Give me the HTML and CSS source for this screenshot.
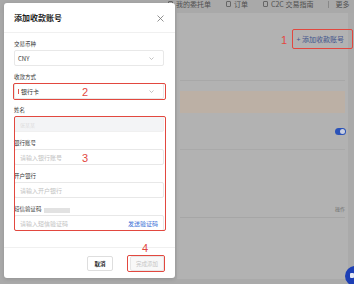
FILE: index.html
```html
<!DOCTYPE html>
<html lang="zh-CN">
<head>
<meta charset="utf-8">
<title>添加收款账号</title>
<link rel="stylesheet" href="styles.css">
</head>
<body>
<div class="page">
  <nav class="topnav">
    <span class="nav-item"><span class="nav-ico"></span>我的委托单</span>
    <span class="nav-item"><span class="nav-ico"></span>订单</span>
    <span class="nav-item"><span class="nav-ico"></span>C2C 交易指南</span>
    <span class="nav-sep"></span>
    <span class="nav-item nav-more">更多</span>
  </nav>
  <main class="content">
    <div class="toolbar"><span class="add-btn">+ 添加收款账号</span></div>
    <div class="notice"></div>
    <div class="row-toggle"><span class="toggle"><span class="knob"></span></span></div>
    <div class="table-head"><span>操作</span></div>
  </main>
</div>

<div class="fab"><span class="fab-ico"></span></div>

<section class="modal">
  <header class="modal-head">
    <h1 class="modal-title">添加收款账号</h1>
    <svg class="close" width="7" height="7" viewBox="0 0 7 7"><path d="M0.5 0.5L6.5 6.5M6.5 0.5L0.5 6.5" stroke="#777" stroke-width="0.8" fill="none"/></svg>
  </header>
  <div class="modal-body">
    <div class="field">
      <div class="label">交易币种</div>
      <div class="control select"><span>CNY</span><svg class="chev" width="5" height="3" viewBox="0 0 5 3"><path d="M0.5 0.5L2.5 2.5L4.5 0.5" stroke="#aaa" stroke-width="0.7" fill="none"/></svg></div>
    </div>
    <div class="field">
      <div class="label">收款方式</div>
      <div class="control select"><span class="bank"><span class="bank-mark"></span>银行卡</span><svg class="chev" width="5" height="3" viewBox="0 0 5 3"><path d="M0.5 0.5L2.5 2.5L4.5 0.5" stroke="#aaa" stroke-width="0.7" fill="none"/></svg></div>
    </div>
    <div class="field">
      <div class="label">姓名</div>
      <div class="control disabled"><span class="blurred">张某某</span></div>
    </div>
    <div class="field">
      <div class="label">银行账号</div>
      <div class="control"><span class="ph">请输入银行账号</span></div>
    </div>
    <div class="field">
      <div class="label">开户银行</div>
      <div class="control"><span class="ph">请输入开户银行</span></div>
    </div>
    <div class="field">
      <div class="label">短信验证码<span class="mask"></span></div>
      <div class="control"><span class="ph">请输入短信验证码</span><span class="send">发送验证码</span></div>
    </div>
  </div>
  <footer class="modal-foot">
    <span class="btn btn-cancel">取消</span>
    <span class="btn btn-done">完成添加</span>
  </footer>
</section>

<div class="mark box1"></div>
<div class="mark box2"></div>
<div class="mark box3"></div>
<div class="mark box4"></div>
<span class="num n1">1</span>
<span class="num n2">2</span>
<span class="num n3">3</span>
<span class="num n4">4</span>
</body>
</html>
```

FILE: styles.css
```css
* { box-sizing: border-box; margin: 0; padding: 0; }
html, body { width: 354px; height: 284px; overflow: hidden; }
body {
  background: #aaaaaa;
  font-family: "Noto Sans CJK SC", "Noto Sans", sans-serif;
  position: relative;
}
.page {
  display: grid;
  grid-template-rows: 13px 266px;
  height: 284px;
}
.topnav {
  display: flex;
  align-items: flex-start;
  padding-left: 168px;
  gap: 15px;
  background: #a9a9a9;
  font-size: 7px;
  line-height: 8px;
  color: #505050;
  white-space: nowrap;
}
.nav-item { display: flex; align-items: center; gap: 3px; }
.nav-ico {
  width: 5px; height: 6px;
  border: 0.8px solid #666;
  border-radius: 1px;
}
.nav-sep { width: 1px; height: 7px; background: #888; margin-top: 1px; margin-right: -9px; }
.content {
  margin-left: 177px;
  width: 171px;
  padding: 16px 3px 0 3px;
  background: #b2b2b2;
  display: flex;
  flex-direction: column;
}
.toolbar {
  display: flex;
  justify-content: flex-end;
  align-items: center;
  height: 20px;
  border-bottom: 1px solid #a8a8a8;
  box-sizing: content-box;
  padding-bottom: 31px;
  height: 20px;
}
.add-btn {
  font-size: 7px;
  color: #44558c;
  line-height: 10px;
  margin-right: 1px;
}
.notice {
  margin-top: 10px;
  height: 22px;
  background: #bcb0a5;
}
.row-toggle {
  height: 37px;
  border-bottom: 1px solid #a9a9a9;
  display: flex;
  align-items: center;
  justify-content: flex-end;
}
.toggle {
  width: 11px; height: 7px;
  border-radius: 4px;
  background: #2a52b8;
  display: flex;
  align-items: center;
  justify-content: flex-end;
  padding-right: 1px;
  margin-right: -1px;
}
.knob { width: 5px; height: 5px; border-radius: 50%; background: #c9cfe0; }
.table-head {
  height: 68px;
  border-bottom: 1px solid #a6a6a6;
  display: flex;
  align-items: flex-end;
  justify-content: flex-end;
  padding-bottom: 5px;
  font-size: 5px;
  line-height: 7px;
  color: #707070;
}
.fab {
  position: absolute;
  left: 345px; top: 266px;
  width: 20px; height: 20px;
  border-radius: 50%;
  background: #1d3fb5;
}
.fab-ico {
  position: absolute;
  left: 5px; top: 7px;
  width: 4px; height: 5px;
  background: #e6e9f4;
  border-radius: 1px;
}

/* modal */
.modal {
  position: absolute;
  left: 4px; top: 3px;
  width: 171px; height: 275px;
  background: #fff;
  border-radius: 3px;
  box-shadow: 0 1px 4px rgba(0,0,0,0.15);
  display: flex;
  flex-direction: column;
}
.modal-head {
  height: 30px;
  padding: 0 10px;
  display: flex;
  align-items: center;
  justify-content: space-between;
  border-bottom: 1px solid #f0f0f0;
  padding-top: 1px;
}
.modal-title {
  font-size: 8px;
  font-weight: 600;
  color: #1e1e1e;
  line-height: 10px;
}
.close { margin-right: 1px; }
.modal-body {
  flex: 1;
  padding: 7px 11px 0 10px;
  display: flex;
  flex-direction: column;
  gap: 7px;
}
.label {
  font-size: 5.5px;
  line-height: 8px;
  color: #333;
  margin-bottom: 2px;
  display: flex;
  align-items: center;
}
.mask {
  display: inline-block;
  width: 26px; height: 5px;
  background: #e2e2e2;
  margin-left: 2px;
  margin-top: 3px;
}
.control {
  height: 16px;
  border: 1px solid #e8e8e8;
  border-radius: 2px;
  padding: 0 4px 0 5px;
  display: flex;
  align-items: center;
  justify-content: space-between;
  font-size: 6px;
  color: #333;
}
.select { padding-left: 3px; }
.chev { margin-right: 5px; }
.bank { display: flex; align-items: center; gap: 2px; }
.bank-mark { width: 1px; height: 5px; background: #e0574f; }
.disabled { background: #f3f4f6; border-color: #f0f0f0; }
.blurred { color: #dcdcdc; font-size: 5px; }
.ph { color: #c2c2c2; }
.send { color: #3b6fd6; margin-right: 1px; }
.modal-foot {
  height: 31px;
  border-top: 1px solid #f0f0f0;
  padding: 8px 11px 0 0;
  display: flex;
  justify-content: flex-end;
  align-items: flex-start;
  gap: 17px;
}
.btn {
  height: 15px;
  border-radius: 2px;
  display: flex;
  align-items: center;
  justify-content: center;
  font-size: 5.5px;
}
.btn-cancel {
  width: 26px;
  border: 1px solid #dedede;
  color: #222;
  font-weight: 700;
}
.btn-done {
  width: 34px;
  border: 1px solid #e6e6e6;
  background: #f8f8f8;
  color: #c4c4c4;
}

/* annotations */
.mark {
  position: absolute;
  border: 1.5px solid #e2483f;
  border-radius: 2px;
}
.box1 { left: 292px; top: 29px; width: 61px; height: 20px; }
.box2 { left: 13px; top: 83px; width: 153px; height: 17px; }
.box3 { left: 14px; top: 116px; width: 152px; height: 115px; }
.box4 { left: 127px; top: 255px; width: 38px; height: 17px; }
.num {
  position: absolute;
  font-family: "Liberation Sans", sans-serif;
  font-size: 11px;
  line-height: 11px;
  color: #e2483f;
}
.n1 { left: 281px; top: 35px; }
.n2 { left: 82px; top: 87px; }
.n3 { left: 82px; top: 153px; }
.n4 { left: 142px; top: 243px; }
```
